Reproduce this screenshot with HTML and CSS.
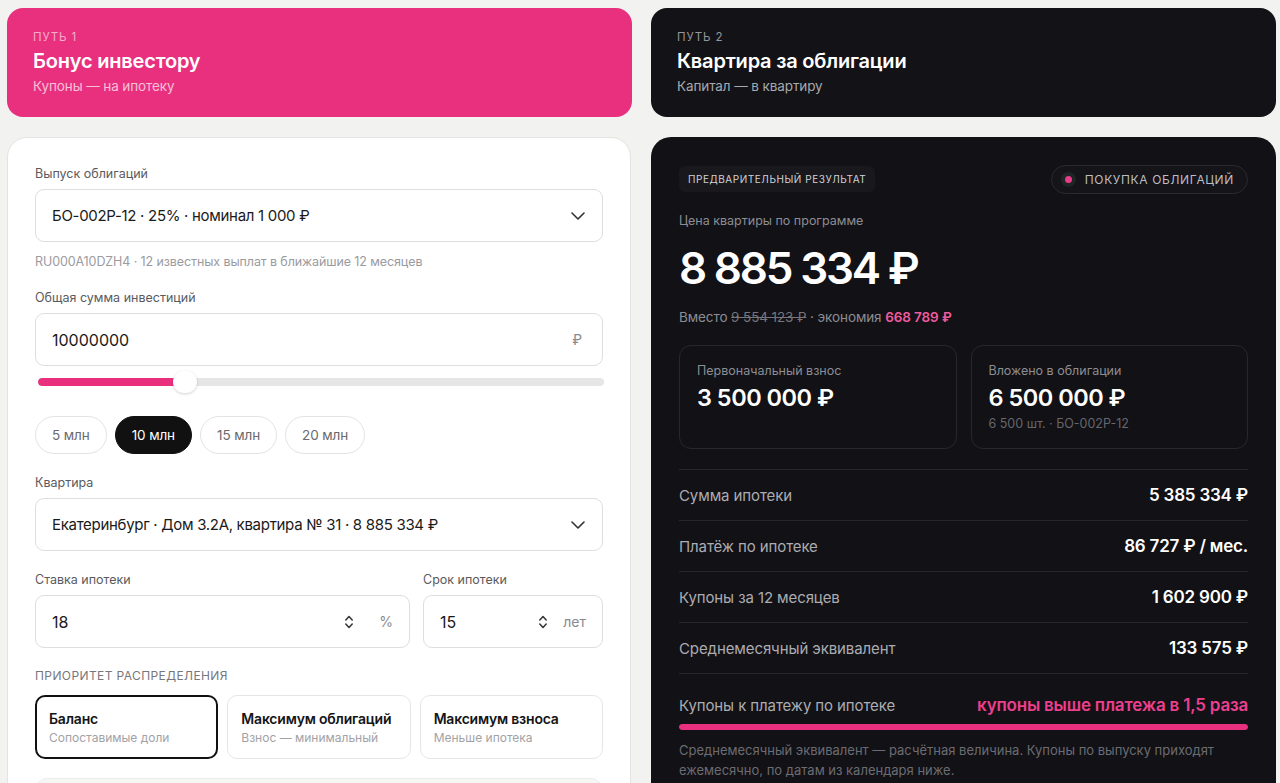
FILE: index.html
```html
<!DOCTYPE html>
<html lang="ru">
<head>
<meta charset="utf-8">
<title>Калькулятор</title>
<link rel="stylesheet" href="styles.css">
</head>
<body>
<div class="page">
  <div class="tabs">
    <div class="tab tab-pink">
      <div class="tab-kicker">ПУТЬ 1</div>
      <div class="tab-title">Бонус инвестору</div>
      <div class="tab-sub">Купоны — на ипотеку</div>
    </div>
    <div class="tab tab-dark">
      <div class="tab-kicker">ПУТЬ 2</div>
      <div class="tab-title">Квартира за облигации</div>
      <div class="tab-sub">Капитал — в квартиру</div>
    </div>
  </div>

  <div class="panels">
    <div class="panel panel-form">
      <div class="label">Выпуск облигаций</div>
      <div class="control">
        <span class="control-value control-text">БО-002Р-12 · 25% · номинал 1 000 ₽</span>
        <svg class="chev" width="14" height="8" viewBox="0 0 14 8"><polyline points="1,1 7,7 13,1" fill="none" stroke="#333" stroke-width="1.6" stroke-linecap="round" stroke-linejoin="round"/></svg>
      </div>
      <div class="hint">RU000A10DZH4 · 12 известных выплат в ближайшие 12 месяцев</div>

      <div class="label mt-field">Общая сумма инвестиций</div>
      <div class="control">
        <span class="control-value">10000000</span>
        <span class="unit">₽</span>
      </div>
      <div class="slider">
        <div class="slider-track"><div class="slider-fill" style="width:26%"></div></div>
        <div class="slider-thumb" style="left:26%"></div>
      </div>
      <div class="chips">
        <span class="chip">5 млн</span>
        <span class="chip chip-active">10 млн</span>
        <span class="chip">15 млн</span>
        <span class="chip">20 млн</span>
      </div>

      <div class="label mt-chips">Квартира</div>
      <div class="control">
        <span class="control-value control-text">Екатеринбург · Дом 3.2А, квартира № 31 · 8 885 334 ₽</span>
        <svg class="chev" width="14" height="8" viewBox="0 0 14 8"><polyline points="1,1 7,7 13,1" fill="none" stroke="#333" stroke-width="1.6" stroke-linecap="round" stroke-linejoin="round"/></svg>
      </div>

      <div class="pair mt-field2">
        <div class="pair-col">
          <div class="label">Ставка ипотеки</div>
          <div class="control">
            <span class="control-value">18</span>
            <svg class="spin" width="10" height="18" viewBox="0 0 10 18"><polyline points="1.8,7 5,3.5 8.2,7" fill="none" stroke="#3a3a3a" stroke-width="1.6" stroke-linecap="round" stroke-linejoin="round"/><polyline points="1.8,11 5,14.5 8.2,11" fill="none" stroke="#3a3a3a" stroke-width="1.6" stroke-linecap="round" stroke-linejoin="round"/></svg>
            <span class="unit unit-pct">%</span>
          </div>
        </div>
        <div class="pair-col">
          <div class="label">Срок ипотеки</div>
          <div class="control">
            <span class="control-value">15</span>
            <svg class="spin" width="10" height="18" viewBox="0 0 10 18"><polyline points="1.8,7 5,3.5 8.2,7" fill="none" stroke="#3a3a3a" stroke-width="1.6" stroke-linecap="round" stroke-linejoin="round"/><polyline points="1.8,11 5,14.5 8.2,11" fill="none" stroke="#3a3a3a" stroke-width="1.6" stroke-linecap="round" stroke-linejoin="round"/></svg>
            <span class="unit unit-yr">лет</span>
          </div>
        </div>
      </div>

      <div class="section-title">ПРИОРИТЕТ РАСПРЕДЕЛЕНИЯ</div>
      <div class="options">
        <div class="option option-active">
          <div class="option-title">Баланс</div>
          <div class="option-sub">Сопоставимые доли</div>
        </div>
        <div class="option">
          <div class="option-title">Максимум облигаций</div>
          <div class="option-sub">Взнос — минимальный</div>
        </div>
        <div class="option">
          <div class="option-title">Максимум взноса</div>
          <div class="option-sub">Меньше ипотека</div>
        </div>
      </div>
      <div class="extra-box"></div>
    </div>

    <div class="panel panel-result">
      <div class="result-head">
        <span class="badge">ПРЕДВАРИТЕЛЬНЫЙ РЕЗУЛЬТАТ</span>
        <span class="pill"><span class="pill-dot"></span>ПОКУПКА ОБЛИГАЦИЙ</span>
      </div>
      <div class="price-label">Цена квартиры по программе</div>
      <div class="price">8 885 334 ₽</div>
      <div class="price-note">Вместо <s>9 554 123 ₽</s> · экономия <b>668 789 ₽</b></div>

      <div class="boxes">
        <div class="box">
          <div class="box-label">Первоначальный взнос</div>
          <div class="box-value">3 500 000 ₽</div>
        </div>
        <div class="box">
          <div class="box-label">Вложено в облигации</div>
          <div class="box-value">6 500 000 ₽</div>
          <div class="box-sub">6 500 шт. · БО-002Р-12</div>
        </div>
      </div>

      <div class="rows">
        <div class="row"><span class="row-label">Сумма ипотеки</span><span class="row-value">5 385 334 ₽</span></div>
        <div class="row"><span class="row-label">Платёж по ипотеке</span><span class="row-value">86 727 ₽ / мес.</span></div>
        <div class="row"><span class="row-label">Купоны за 12 месяцев</span><span class="row-value">1 602 900 ₽</span></div>
        <div class="row"><span class="row-label">Среднемесячный эквивалент</span><span class="row-value">133 575 ₽</span></div>
        <div class="row row-last">
          <div class="row-line"><span class="row-label">Купоны к платежу по ипотеке</span><span class="row-value row-pink">купоны выше платежа в 1,5 раза</span></div>
          <div class="bar"><div class="bar-fill" style="width:100%"></div></div>
        </div>
      </div>
      <p class="footnote">Среднемесячный эквивалент — расчётная величина. Купоны по выпуску приходят ежемесячно, по датам из календаря ниже.</p>
    </div>
  </div>
</div>
</body>
</html>
```

FILE: styles.css
```css
html, body {
  margin: 0;
  padding: 0;
  height: 783px;
  overflow: hidden;
}
body {
  background: #f2f2f0;
  font-family: "Inter", "Noto Sans", sans-serif;
  color: #161616;
}
.page {
  padding: 8px 4px 0 7px;
}
.tabs {
  display: grid;
  grid-template-columns: 1fr 1fr;
  column-gap: 19px;
}
.tab {
  height: 109px;
  box-sizing: border-box;
  border-radius: 16px;
  padding: 22px 26px 0;
}
.tab-pink {
  background: #e8307f;
  color: #fff;
}
.tab-dark {
  background: #121217;
  color: #fff;
}
.tab-kicker {
  font-size: 11.5px;
  line-height: 14px;
  letter-spacing: 0.9px;
  color: rgba(255,255,255,0.6);
}
.tab-title {
  font-size: 20px;
  line-height: 26px;
  font-weight: 600;
  margin-top: 4px;
  letter-spacing: -0.2px;
}
.tab-sub {
  font-size: 13.5px;
  line-height: 18px;
  margin-top: 3px;
  letter-spacing: -0.1px;
}
.tab-pink .tab-sub { color: rgba(255,255,255,0.7); }
.tab-dark .tab-sub { color: #a9a9ae; }
.tab-dark .tab-kicker { color: #96969c; }

.panels {
  display: grid;
  grid-template-columns: 1fr 1fr;
  column-gap: 19px;
  margin-top: 20px;
  align-items: start;
}
.panel {
  border-radius: 20px;
  box-sizing: border-box;
  padding: 27px 28px 40px;
  min-height: 700px;
}
.panel-form {
  background: #fff;
  border: 1px solid #e4e4e2;
  margin-right: 1px;
  padding-left: 27px;
  padding-right: 27px;
}
.panel-result {
  background: #111116;
  color: #fff;
}

/* form */
.label {
  font-size: 12.5px;
  line-height: 16px;
  color: #5a5a5e;
  margin: 1px 0 7px;
}
.mt-field { margin-top: 20px; }
.mt-chips { margin-top: 21px; }
.mt-field2 { margin-top: 20px; }
.control {
  height: 53px;
  box-sizing: border-box;
  border: 1px solid #dedede;
  border-radius: 9px;
  display: flex;
  align-items: center;
  padding: 0 17px 0 16px;
  background: #fff;
}
.control-value {
  flex: 1;
  font-size: 16px;
  color: #1a1a1a;
  white-space: nowrap;
}
.control-text {
  font-size: 15px;
  letter-spacing: -0.3px;
}
.chev { flex: none; }
.unit {
  font-size: 14px;
  color: #8a8a8e;
  margin-right: 3px;
}
.hint {
  margin-top: 12px;
  font-size: 12.5px;
  line-height: 16px;
  letter-spacing: -0.1px;
  color: #9b9b9f;
}
.slider {
  position: relative;
  height: 22px;
  margin: 5px 0 0 3px;
}
.slider-track {
  position: absolute;
  left: 0;
  right: -1px;
  top: 7px;
  height: 8px;
  border-radius: 4px;
  background: #e6e6e6;
  overflow: hidden;
}
.slider-fill {
  height: 100%;
  background: #e8307f;
  border-radius: 4px;
}
.slider-thumb {
  position: absolute;
  top: 0;
  width: 24px;
  height: 22px;
  margin-left: -12px;
  border-radius: 11px;
  background: #fff;
  box-shadow: 0 1px 3px rgba(0,0,0,0.18);
}
.chips {
  display: flex;
  gap: 8px;
  margin-top: 23px;
}
.chip {
  height: 38px;
  box-sizing: border-box;
  border: 1px solid #e3e3e3;
  border-radius: 19px;
  padding: 0 16px;
  display: inline-flex;
  align-items: center;
  font-size: 13.5px;
  letter-spacing: -0.1px;
  color: #6a6a6e;
}
.chip-active {
  background: #111;
  border-color: #111;
  color: #fff;
}
.pair {
  display: grid;
  grid-template-columns: 1fr 180px;
  column-gap: 13px;
}
.spin { flex: none; }
.pair .control { padding-right: 16px; }
.unit-pct { margin-left: 25px; margin-right: 0; }
.unit-yr { margin-left: 15px; margin-right: 0; }

.section-title {
  margin-top: 20px;
  font-size: 12px;
  line-height: 16px;
  letter-spacing: 0.4px;
  color: #77777b;
}
.options {
  display: grid;
  grid-template-columns: 1fr 1fr 1fr;
  column-gap: 9px;
  margin-top: 11px;
}
.option {
  height: 64px;
  box-sizing: border-box;
  border: 1px solid #e6e6e6;
  border-radius: 10px;
  padding: 14px 13px 0;
}
.option-active {
  border: 2px solid #111;
  padding: 13px 12px 0;
}
.option-title {
  font-size: 14px;
  line-height: 18px;
  font-weight: 600;
  letter-spacing: -0.2px;
  color: #141414;
  white-space: nowrap;
}
.option-sub {
  font-size: 12px;
  line-height: 16px;
  margin-top: 2px;
  color: #a2a2a6;
  white-space: nowrap;
}
.extra-box {
  margin-top: 19px;
  height: 80px;
  border-radius: 12px;
  background: #f6f6f5;
  border: 1px solid #eeeeec;
}

/* result */
.result-head {
  display: flex;
  justify-content: space-between;
  align-items: center;
  height: 30px;
}
.badge {
  height: 26px;
  display: inline-flex;
  align-items: center;
  padding: 0 9px;
  border-radius: 6px;
  background: #18181d;
  font-size: 10px;
  letter-spacing: 0.55px;
  color: #d2d2d6;
}
.pill {
  height: 29px;
  box-sizing: border-box;
  border: 1px solid #2a2a31;
  border-radius: 15px;
  display: inline-flex;
  align-items: center;
  padding: 0 13px 0 13px;
  font-size: 12px;
  letter-spacing: 0.65px;
  color: #bdbdc2;
  background: #141419;
}
.pill-dot {
  width: 7px;
  height: 7px;
  border-radius: 50%;
  background: #ea3a8a;
  box-shadow: 0 0 0 4px #1d2624;
  margin-right: 13px;
}
.price-label {
  margin-top: 19px;
  font-size: 12.5px;
  line-height: 16px;
  color: #8d8d93;
}
.price {
  margin-top: 14px;
  font-size: 44px;
  line-height: 50px;
  font-weight: 600;
  letter-spacing: -2.2px;
  color: #fff;
}
.price-note {
  margin-top: 16px;
  font-size: 13.5px;
  line-height: 16px;
  letter-spacing: -0.1px;
  color: #8d8d93;
}
.price-note s { color: #76767c; }
.price-note b { color: #f05a9e; font-weight: 600; }
.boxes {
  display: grid;
  grid-template-columns: 1fr 1fr;
  column-gap: 14px;
  margin-top: 20px;
}
.box {
  height: 104px;
  box-sizing: border-box;
  border: 1px solid #27272d;
  border-radius: 12px;
  padding: 17px 17px 0;
}
.box-label {
  font-size: 12.5px;
  line-height: 16px;
  color: #8d8d93;
}
.box-value {
  margin-top: 4px;
  font-size: 23.5px;
  line-height: 30px;
  font-weight: 600;
  letter-spacing: -0.5px;
  color: #fff;
}
.box-sub {
  margin-top: 3px;
  font-size: 12.5px;
  line-height: 16px;
  color: #66666c;
}
.rows {
  margin-top: 20px;
}
.row {
  height: 51px;
  border-top: 1px solid #26262c;
  display: flex;
  justify-content: space-between;
  align-items: center;
  box-sizing: border-box;
}
.row-label {
  font-size: 15px;
  letter-spacing: -0.1px;
  color: #acacb1;
}
.row-value {
  font-size: 17px;
  font-weight: 600;
  letter-spacing: -0.2px;
  color: #fff;
}
.row-last {
  display: block;
  height: auto;
  padding-top: 21px;
}
.row-line {
  display: flex;
  justify-content: space-between;
  align-items: center;
  height: 20px;
}
.row-pink { color: #ec3f8d; }
.bar {
  margin-top: 9px;
  height: 6px;
  border-radius: 3px;
  background: #2a2a30;
  overflow: hidden;
}
.bar-fill {
  height: 100%;
  background: #e8307f;
  border-radius: 3px;
}
.footnote {
  margin: 10px 0 0;
  font-size: 13px;
  line-height: 20px;
  color: #6c6c72;
}
```
